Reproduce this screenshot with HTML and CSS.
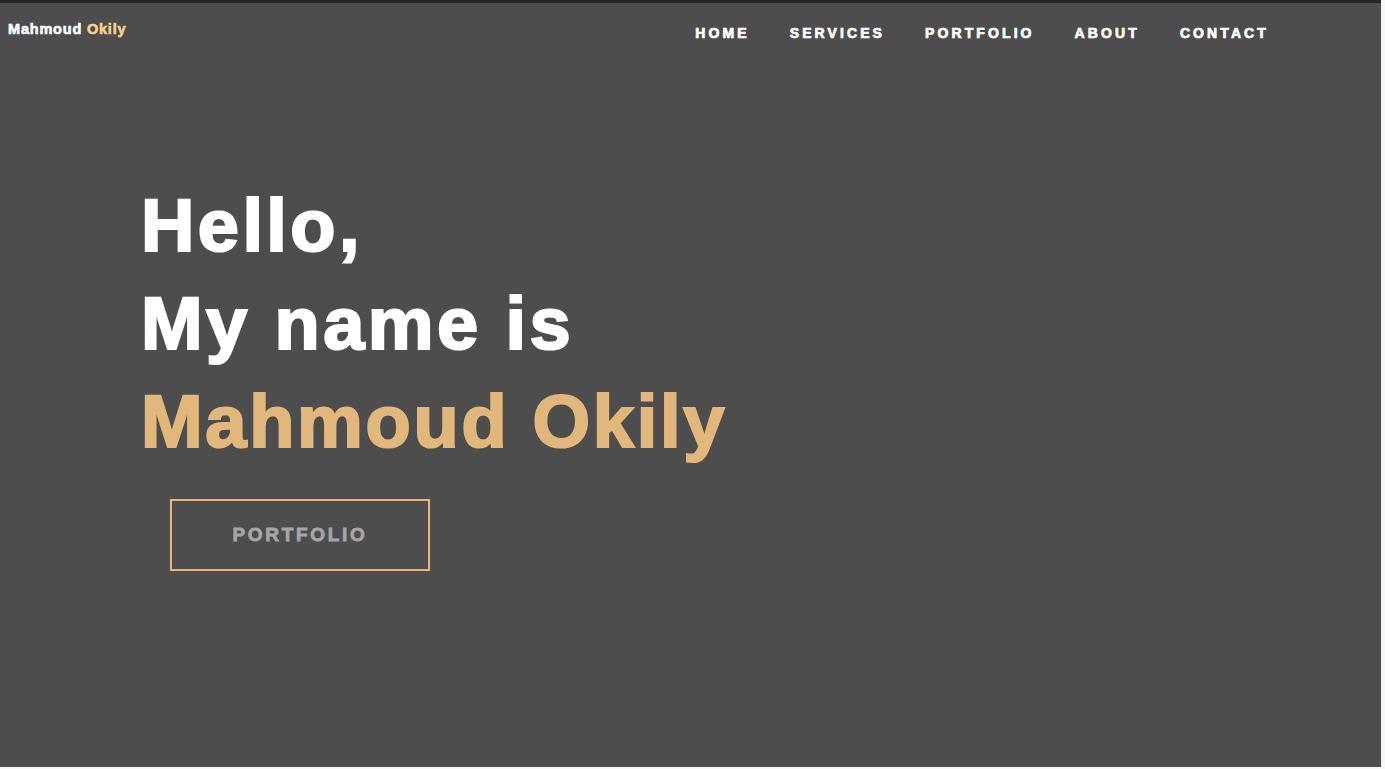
FILE: index.html
```html
<!DOCTYPE html>
<html lang="en">
<head>
<meta charset="utf-8">
<title>Mahmoud Okily</title>
<link rel="stylesheet" href="styles.css">
</head>
<body>
<div class="page">
  <header class="topbar">
    <div class="logo">Mahmoud <span class="logo-accent">Okily</span></div>
    <nav class="nav">
      <a href="#" class="nav-link">HOME</a>
      <a href="#" class="nav-link">SERVICES</a>
      <a href="#" class="nav-link">PORTFOLIO</a>
      <a href="#" class="nav-link">ABOUT</a>
      <a href="#" class="nav-link">CONTACT</a>
    </nav>
  </header>
  <main class="hero">
    <h1 class="hero-title">
      <span class="line">Hello,</span>
      <span class="line">My name is</span>
      <span class="line accent">Mahmoud Okily</span>
    </h1>
    <a href="#" class="btn">PORTFOLIO</a>
  </main>
</div>
</body>
</html>
```
FILE: styles.css
```css
html, body {
  margin: 0;
  padding: 0;
}
body {
  background: #f7f7f7;
  font-family: "Liberation Sans", Arial, sans-serif;
  width: 1385px;
  height: 769px;
  overflow: hidden;
}
.page {
  width: 1381px;
  height: 764px;
  background: #4d4d4d;
  border-top: 3px solid #262626;
  box-sizing: content-box;
}
.topbar {
  display: flex;
  justify-content: space-between;
  align-items: flex-start;
}
.logo {
  margin: 18px 0 0 8px;
  font-size: 14.5px;
  font-weight: 700;
  letter-spacing: 0.8px;
  color: #ffffff;
  -webkit-text-stroke: 0.6px currentColor;
}
.logo-accent {
  color: #f3d28f;
}
.nav {
  display: flex;
  gap: 40px;
  margin: 22px 112px 0 0;
}
.nav-link {
  color: #ffffff;
  text-decoration: none;
  font-size: 14px;
  font-weight: 700;
  letter-spacing: 3.1px;
  -webkit-text-stroke: 0.7px currentColor;
}
.hero {
  padding: 136px 0 0 141px;
}
.hero-title {
  margin: 0;
  font-size: 74px;
  font-weight: 900;
  line-height: 98px;
  letter-spacing: 3.4px;
  color: #ffffff;
  -webkit-text-stroke: 2.2px currentColor;
}
.line {
  display: block;
}
.accent {
  color: #e2b77b;
  letter-spacing: 2.7px;
}
.btn {
  display: flex;
  align-items: center;
  justify-content: center;
  width: 256px;
  height: 68px;
  margin: 28px 0 0 29px;
  border: 2px solid #e2b77b;
  color: #a6a6a6;
  text-decoration: none;
  font-size: 19px;
  font-weight: 700;
  letter-spacing: 2.7px;
  -webkit-text-stroke: 0.8px currentColor;
}
```
